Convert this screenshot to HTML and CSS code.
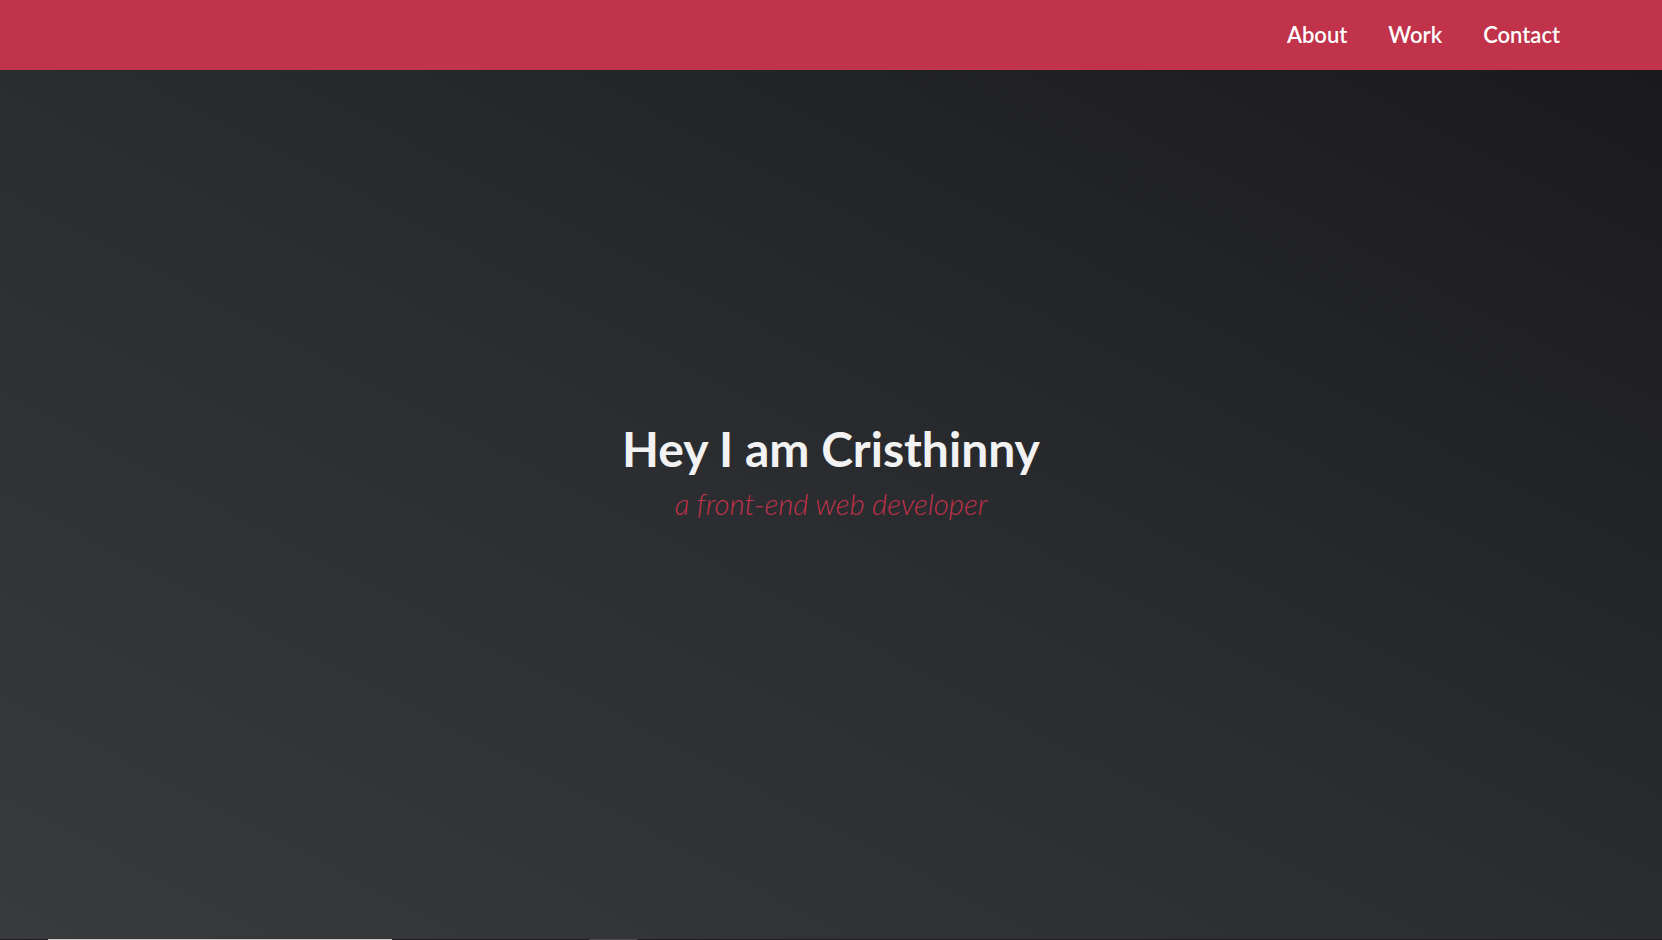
FILE: index.html
```html
<!DOCTYPE html>
<html lang="en">
<head>
<meta charset="utf-8">
<title>Cristhinny</title>
<link rel="stylesheet" href="styles.css">
</head>
<body>
<header class="topbar">
  <nav class="nav">
    <a class="nav-link" href="#about">About</a>
    <a class="nav-link" href="#work">Work</a>
    <a class="nav-link" href="#contact">Contact</a>
  </nav>
</header>
<main>
  <section class="hero">
    <h1 class="hero-title">Hey I am Cristhinny</h1>
    <p class="hero-sub">a front-end web developer</p>
  </section>
  <section class="next">
    <div class="next-bar next-bar-light"></div>
    <div class="next-bar next-bar-dark"></div>
  </section>
</main>
</body>
</html>
```
FILE: styles.css
```css
* { box-sizing: border-box; }
html, body { margin: 0; padding: 0; }
body {
  font-family: "Lato", "Open Sans", sans-serif;
  background: #1c1d1f;
  overflow: hidden;
}
.topbar {
  height: 70px;
  background: #c0334a;
  display: flex;
  align-items: center;
  justify-content: flex-end;
  padding-right: 102px;
  padding-bottom: 2px;
}
.nav {
  display: flex;
  gap: 41px;
}
.nav-link {
  color: #ffffff;
  text-decoration: none;
  font-size: 22px;
  font-weight: 600;
}
.hero {
  height: 869px;
  padding-bottom: 68px;
  display: flex;
  flex-direction: column;
  align-items: center;
  justify-content: center;
  background: linear-gradient(to top right, #383b3e 0%, #2a2c2f 50%, #1a1a1c 100%);
}
.hero-title {
  margin: 0;
  font-size: 48px;
  font-weight: 700;
  line-height: 1.2;
  color: #f2f2f2;
}
.hero-sub {
  margin: 8px 0 0;
  font-size: 29.3px;
  font-weight: 300;
  font-style: italic;
  line-height: 1.2;
  color: #c0324a;
}
.next {
  height: 1px;
  background: #1d1d1f;
  display: flex;
  padding-left: 48px;
}
.next-bar { height: 1px; }
.next-bar-light { width: 344px; background: #c9c9c9; }
.next-bar-dark { width: 48px; margin-left: 197px; background: #4b4b50; }
```
